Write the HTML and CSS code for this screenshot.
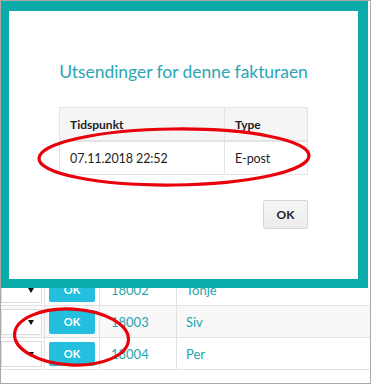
FILE: index.html
```html
<!DOCTYPE html>
<html>
<head>
  <title>Utsendinger</title>
  <link rel="stylesheet" href="styles.css">
</head>
<body>

  <div class="window">

    <div class="list">
      <div class="row">
        <div class="cell pick"><div class="select"><span class="caret"></span></div></div>
        <div class="cell"><button class="ok">OK</button></div>
        <div class="cell num">18002</div>
        <div class="cell name">Tonje</div>
      </div>
      <div class="row odd">
        <div class="cell pick"><div class="select"><span class="caret"></span></div></div>
        <div class="cell"><button class="ok">OK</button></div>
        <div class="cell num">18003</div>
        <div class="cell name">Siv</div>
      </div>
      <div class="row">
        <div class="cell pick"><div class="select"><span class="caret"></span></div></div>
        <div class="cell"><button class="ok">OK</button></div>
        <div class="cell num">18004</div>
        <div class="cell name">Per</div>
      </div>
    </div>

    <div class="modal">
      <h3 class="modal-title">Utsendinger for denne fakturaen</h3>

      <table class="sent">
        <thead>
          <tr>
            <th class="time">Tidspunkt</th>
            <th>Type</th>
          </tr>
        </thead>
        <tbody>
          <tr>
            <td class="time">07.11.2018 22:52</td>
            <td>E-post</td>
          </tr>
        </tbody>
      </table>

      <div class="actions">
        <button class="btn">OK</button>
      </div>
    </div>

    <!-- red marks drawn on top of the screenshot -->
    <svg class="marks" width="371" height="384" viewBox="0 0 371 384">
      <ellipse cx="174" cy="157" rx="135" ry="28" transform="rotate(-0.6 174 157)" />
      <ellipse cx="71.5" cy="337" rx="57" ry="28" transform="rotate(3 71.5 337)" />
    </svg>

  </div>

</body>
</html>
```

FILE: styles.css
```css
body {
  margin: 0;
  background: #fff;
  font-family: Lato, "Open Sans", sans-serif;
}
.window {
  position: relative;
  width: 371px;
  height: 384px;
  box-sizing: border-box;
  border: 1px solid #a9a9a9;
  overflow: hidden;
}

/* page behind the dialog */
.list {
  margin-top: 273px;
}
.row {
  display: grid;
  grid-template-columns: 44px 55px 77px 1fr;
  height: 32px;
  box-sizing: border-box;
  border-bottom: 1px solid #e1e1e1;
}
.row.odd {
  background: #f8f8f8;
}
.cell {
  border-right: 1px solid #e1e1e1;
  display: flex;
  align-items: center;
  font-size: 13px;
  color: #23a6b0;
}
.cell:last-child {
  border-right: none;
}
.pick {
  justify-content: flex-end;
}
.select {
  position: relative;
  width: 50px;
  height: 26px;
  margin-right: 2px;
  box-sizing: border-box;
  border: 1px solid #dcdcdc;
  background: #fff;
}
.caret {
  position: absolute;
  right: 7px;
  top: 10px;
  border-left: 3px solid transparent;
  border-right: 3px solid transparent;
  border-top: 5px solid #111;
}
.ok {
  margin-left: 4px;
  width: 46px;
  height: 24px;
  border: none;
  border-radius: 2px;
  background: #24bfdf;
  color: #fff;
  font-family: Lato, sans-serif;
  font-weight: bold;
  font-size: 11px;
  padding: 0;
}
.num {
  padding-left: 11px;
}
.name {
  padding-left: 9px;
}

/* dialog */
.modal {
  position: absolute;
  left: 0;
  top: 0;
  width: 367px;
  height: 287px;
  box-sizing: border-box;
  border-style: solid;
  border-color: #0aaba9;
  border-width: 10px 10px 9px 8px;
  background: #fff;
  padding: 50px 50px 0 50px;
}
.modal-title {
  margin: 0 0 24px 0;
  text-align: center;
  white-space: nowrap;
  font-size: 17.5px;
  letter-spacing: -0.05px;
  line-height: 22px;
  font-weight: normal;
  color: #2aa6b2;
}
.sent {
  width: 100%;
  border-collapse: collapse;
  font-size: 12.5px;
  color: #1e1e1e;
}
.sent th,
.sent td {
  border: 1px solid #e3e3e3;
  text-align: left;
  padding: 0 10px;
  height: 32px;
}
.sent td {
  letter-spacing: -0.1px;
}
.sent th {
  background: #f5f5f5;
  font-size: 12px;
  font-weight: bold;
  border-bottom-width: 2px;
}
.sent .time {
  width: 144px;
}
.actions {
  display: flex;
  justify-content: flex-end;
  margin-top: 25px;
}
.btn {
  width: 45px;
  height: 29px;
  padding: 0;
  border: 1px solid #d8d8d8;
  border-radius: 2px;
  background: linear-gradient(#f6f6f6, #ececec);
  color: #222;
  font-family: Lato, sans-serif;
  font-weight: bold;
  font-size: 12px;
}

.marks {
  position: absolute;
  left: -1px;
  top: -1px;
  pointer-events: none;
}
.marks ellipse {
  fill: none;
  stroke: #e8000a;
  stroke-width: 3.2;
}
```
